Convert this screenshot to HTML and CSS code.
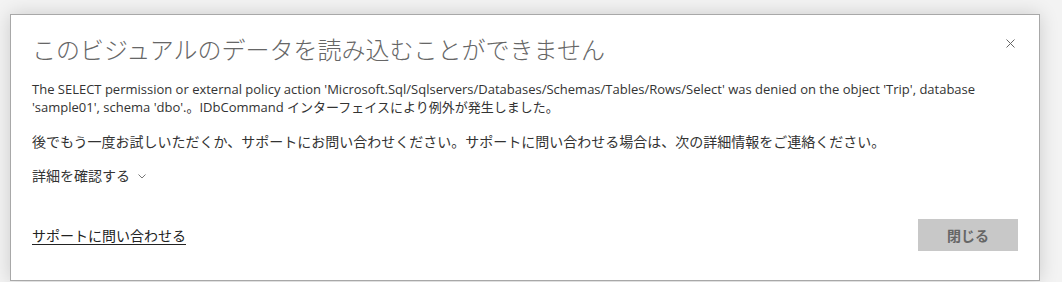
FILE: index.html
```html
<!DOCTYPE html>
<html lang="ja">
<head>
<meta charset="utf-8">
<title>エラー</title>
<link rel="stylesheet" href="styles.css">
</head>
<body>
<div class="dialog">
  <div class="header">
    <h1 class="title">このビジュアルのデータを読み込むことができません</h1>
    <button class="close" aria-label="閉じる">
      <svg width="9" height="9" viewBox="0 0 9 9"><path d="M0.5 0.5 L8.5 8.5 M8.5 0.5 L0.5 8.5" stroke="#666" stroke-width="1" fill="none"/></svg>
    </button>
  </div>
  <p class="msg">The SELECT permission or external policy action 'Microsoft.Sql/Sqlservers/Databases/Schemas/Tables/Rows/Select' was denied on the object 'Trip', database 'sample01', schema 'dbo'.。IDbCommand インターフェイスにより例外が発生しました。</p>
  <p class="msg msg2">後でもう一度お試しいただくか、サポートにお問い合わせください。サポートに問い合わせる場合は、次の詳細情報をご連絡ください。</p>
  <div class="details">
    <span>詳細を確認する</span>
    <svg class="chev" width="8" height="5" viewBox="0 0 8 5"><path d="M0.5 0.5 L4 4 L7.5 0.5" stroke="#777" stroke-width="1" fill="none"/></svg>
  </div>
  <div class="footer">
    <a class="link" href="#">サポートに問い合わせる</a>
    <button class="btn">閉じる</button>
  </div>
</div>
</body>
</html>
```
FILE: styles.css
```css
* { box-sizing: border-box; }
html, body { margin: 0; padding: 0; }
body {
  width: 1062px;
  height: 282px;
  overflow: hidden;
  background: #f3f3f3;
  font-family: "Open Sans", "Noto Sans CJK JP", sans-serif;
  color: #333;
}
.dialog {
  margin: 14px 0 0 10px;
  width: 1030px;
  height: 267px;
  background: #fff;
  border: 1px solid #a8a8a8;
  box-shadow: 0 0 18px rgba(0,0,0,0.16);
  padding: 18px 21px 0 21px;
  display: flex;
  flex-direction: column;
}
.header {
  display: flex;
  justify-content: space-between;
  align-items: flex-start;
}
.title {
  margin: 0;
  font-family: "Noto Sans CJK JP", sans-serif;
  font-weight: 300;
  font-size: 24px;
  line-height: 32px;
  color: #666;
}
.close {
  border: 0;
  background: none;
  padding: 0;
  margin: 6px 3px 0 0;
  width: 9px;
  height: 9px;
  display: flex;
}
.msg {
  margin: 15px 0 0 0;
  font-size: 13px;
  line-height: 18px;
}
.msg2 {
  margin-top: 17px;
  font-size: 14px;
}
.details {
  margin-top: 16px;
  font-size: 14px;
  line-height: 18px;
  display: flex;
  align-items: center;
  gap: 8px;
}
.chev { margin-top: 1px; }
.footer {
  margin-top: 34px;
  display: flex;
  justify-content: space-between;
  align-items: center;
}
.link {
  color: #222;
  font-size: 14px;
  text-decoration: underline;
  text-underline-offset: 3px;
}
.btn {
  width: 100px;
  height: 32px;
  border: 0;
  background: #c8c8c8;
  color: #666;
  font-family: "Noto Sans CJK JP", sans-serif;
  font-weight: 700;
  font-size: 14px;
}
```
